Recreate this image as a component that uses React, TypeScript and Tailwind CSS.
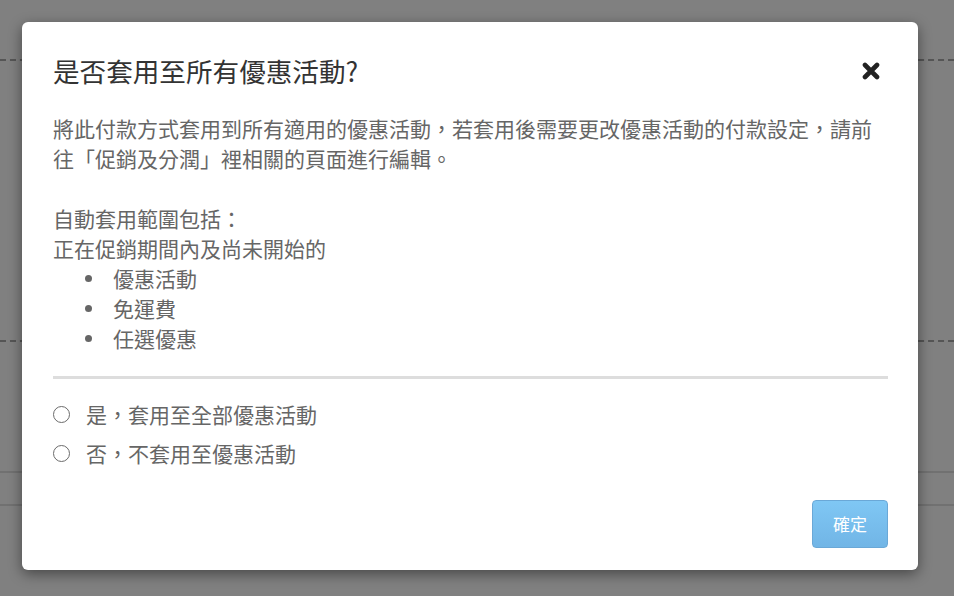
import React from "react";

const font = { fontFamily: '"Noto Sans CJK TC", "Noto Sans", sans-serif' };

function Bullet({ children }: { children: React.ReactNode }) {
  return (
    <div className="flex items-center h-[30px]">
      <span className="ml-[32px] w-[7px] h-[7px] rounded-full bg-[#666]" />
      <span className="ml-[21px]">{children}</span>
    </div>
  );
}

function Radio({ children }: { children: React.ReactNode }) {
  return (
    <label className="flex items-center h-[30px] cursor-pointer">
      <span className="w-[17px] h-[17px] rounded-full border-[1.5px] border-[#6b6b6b] bg-white" />
      <span className="ml-[16px]">{children}</span>
    </label>
  );
}

export default function App() {
  return (
    <div className="relative w-[954px] h-[596px] overflow-hidden bg-[#808080]" style={font}>
      {/* page behind the backdrop */}
      <div className="flex flex-col">
        <div className="h-[61px] border-b-2 border-dashed border-[#555]" />
        <div className="h-[281px] border-b-2 border-dashed border-[#555]" />
        <div className="h-[131px] border-b-2 border-[#717171]" />
        <div className="h-[33px] border-b-2 border-[#717171]" />
      </div>

      {/* modal */}
      <div className="absolute inset-0 pt-[22px] pl-[22px]">
        <div className="w-[896px] h-[548px] bg-white rounded-[6px] shadow-[0_4px_14px_rgba(0,0,0,0.45)] pt-[31px] pl-[31px] pr-[30px] pb-[22px] flex flex-col">
          <div className="flex items-center justify-between h-[36px]">
            <h2 className="text-[26.6px] leading-[36px] text-[#333] font-normal">是否套用至所有優惠活動?</h2>
            <button className="mr-[8px] w-[18px] h-[18px] flex items-center justify-center" aria-label="close">
              <svg viewBox="0 0 18 18" width="18" height="18">
                <path d="M3 3 L15 15 M15 3 L3 15" stroke="#222" strokeWidth="4.6" strokeLinecap="round" />
              </svg>
            </button>
          </div>

          <div className="mt-[24px] text-[21px] leading-[30px] text-[#666]">
            <p>將此付款方式套用到所有適用的優惠活動，若套用後需要更改優惠活動的付款設定，請前往「促銷及分潤」裡相關的頁面進行編輯。</p>
            <p className="mt-[30px]">自動套用範圍包括：</p>
            <p>正在促銷期間內及尚未開始的</p>
            <Bullet>優惠活動</Bullet>
            <Bullet>免運費</Bullet>
            <Bullet>任選優惠</Bullet>
          </div>

          <div className="mt-[23px] h-[3px] bg-[#dddddd]" />

          <div className="mt-[20px] flex flex-col gap-[9px] text-[21px] leading-[30px] text-[#666]">
            <Radio>是，套用至全部優惠活動</Radio>
            <Radio>否，不套用至優惠活動</Radio>
          </div>

          <div className="mt-auto flex justify-end">
            <button className="w-[76px] h-[48px] rounded-[4px] border border-[#6aa8d7] bg-gradient-to-b from-[#7fc7f4] to-[#71b5e6] text-white text-[17px]">
              確定
            </button>
          </div>
        </div>
      </div>
    </div>
  );
}
